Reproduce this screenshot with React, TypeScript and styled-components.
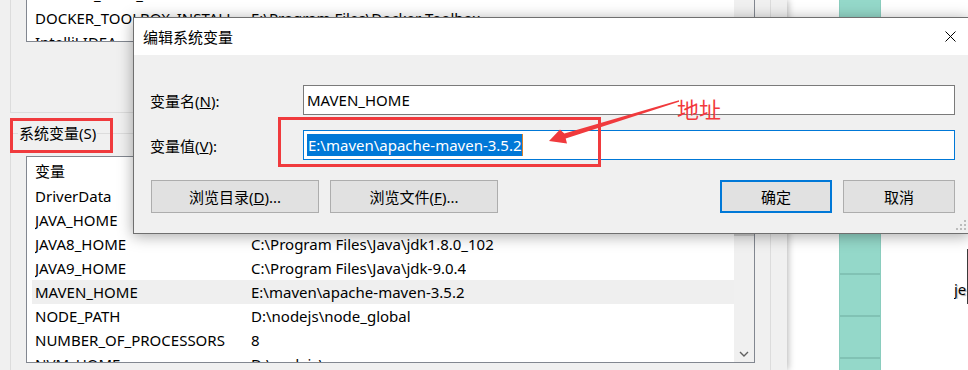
import React from "react";
import styled, { createGlobalStyle } from "styled-components";

type VarRow = {
  name: string;
  value: string;
  selected?: boolean;
};

const userRows: VarRow[] = [
  { name: "DOCKER_CERT_PATH", value: "C:\\Users\\Administrator\\.docker\\machine\\machines\\default" },
  { name: "DOCKER_TOOLBOX_INSTALL_PATH", value: "E:\\Program Files\\Docker Toolbox" },
  { name: "IntelliJ IDEA", value: "D:\\IntelliJ IDEA\\bin;" },
];

const systemRows: VarRow[] = [
  { name: "DriverData", value: "C:\\Windows\\System32\\Drivers\\DriverData" },
  { name: "JAVA_HOME", value: "%JAVA8_HOME%" },
  { name: "JAVA8_HOME", value: "C:\\Program Files\\Java\\jdk1.8.0_102" },
  { name: "JAVA9_HOME", value: "C:\\Program Files\\Java\\jdk-9.0.4" },
  { name: "MAVEN_HOME", value: "E:\\maven\\apache-maven-3.5.2", selected: true },
  { name: "NODE_PATH", value: "D:\\nodejs\\node_global" },
  { name: "NUMBER_OF_PROCESSORS", value: "8" },
  { name: "NVM_HOME", value: "D:\\nodejs\\nvm" },
];

const GlobalStyle = createGlobalStyle`
  html, body {
    margin: 0;
    padding: 0;
  }
  body {
    width: 968px;
    height: 370px;
    overflow: hidden;
    background: #fff;
    color: #000;
    font-family: "Noto Sans", "Noto Sans CJK SC", sans-serif;
    font-size: 15px;
  }
`;

const Desktop = styled.div`
  position: relative;
  display: flex;
  width: 968px;
  height: 370px;
  overflow: hidden;
`;

/* background window: environment variables */
const EnvWindow = styled.div`
  position: relative;
  z-index: 1;
  width: 787px;
  flex-shrink: 0;
  box-sizing: border-box;
  padding-left: 10px;
  display: flex;
  flex-direction: column;
  background: #f0f0f0;
  box-shadow: 1px 0 7px rgba(0, 0, 0, 0.3);
`;

const UserGroup = styled.div`
  width: 761px;
  height: 113px;
  box-sizing: border-box;
  padding-left: 15px;
  border: 1px solid #dcdcdc;
  border-top: none;
`;

const SystemGroup = styled.div`
  flex: 1;
  width: 761px;
  margin-top: 20px;
  box-sizing: border-box;
  padding-left: 15px;
  border: 1px solid #dcdcdc;
  border-bottom: none;
`;

const GroupLabel = styled.div`
  width: fit-content;
  margin: -12px 0 0 -8px;
  padding: 0 1px;
  line-height: 22px;
  background: #f0f0f0;
`;

const ListBox = styled.div<{ $height: number; $open?: boolean }>`
  display: flex;
  width: 729px;
  height: ${(p) => p.$height}px;
  margin-top: ${(p) => (p.$open ? 0 : 12)}px;
  box-sizing: border-box;
  overflow: hidden;
  background: #fff;
  border: 1px solid #828790;
  border-top: ${(p) => (p.$open ? "none" : "1px solid #828790")};
`;

const Rows = styled.div<{ $shift: number }>`
  flex: 1;
  min-width: 0;
  padding-left: 5px;
  margin-top: ${(p) => p.$shift}px;
`;

const Row = styled.div<{ $selected?: boolean; $header?: boolean }>`
  display: flex;
  align-items: center;
  height: ${(p) => (p.$header ? 27 : 24)}px;
  padding-left: 3px;
  white-space: nowrap;
  background: ${(p) => (p.$selected ? "#efefef" : "transparent")};
`;

const NameCell = styled.span`
  width: 216px;
  flex-shrink: 0;
  overflow: hidden;
  text-overflow: ellipsis;
`;

const ValueCell = styled.span`
  overflow: hidden;
`;

const ScrollBar = styled.div`
  width: 20px;
  flex-shrink: 0;
  display: flex;
  flex-direction: column;
  background: #f0f0f0;
`;

const ScrollArrow = styled.div`
  height: 17px;
  display: flex;
  align-items: center;
  justify-content: center;
  color: #606060;
`;

const ScrollThumb = styled.div`
  height: 62px;
  background: #cdcdcd;
`;

const ScrollTrack = styled.div`
  flex: 1;
`;

/* desktop to the right of the window */
const RightPane = styled.div`
  flex: 1;
  display: flex;
  padding-left: 52px;
  background: #fff;
`;

const TealColumn = styled.div`
  width: 42px;
  height: 100%;
  box-sizing: border-box;
  border-left: 1px solid #8acdbe;
  border-right: 1px solid #8acdbe;
  background: repeating-linear-gradient(
    to bottom,
    #94d8c9 0,
    #94d8c9 21px,
    #81c2b4 21px,
    #81c2b4 23px,
    #94d8c9 23px,
    #94d8c9 42px
  );
`;

const DesktopIcon = styled.div`
  margin-left: auto;
  margin-top: 249px;
  display: flex;
  flex-direction: column;
  align-items: flex-end;
`;

const IconEdge = styled.div`
  width: 1px;
  height: 55px;
  background: #3a3a3a;
`;

const IconLabel = styled.div`
  width: 14px;
  margin-top: -25px;
  overflow: hidden;
  font-size: 15px;
  line-height: 20px;
  text-shadow: 0 0 2px #fff, 1px 1px 1px #999;
`;

/* edit dialog */
const Dialog = styled.div`
  position: absolute;
  z-index: 5;
  left: 133px;
  top: 17px;
  width: 837px;
  height: 217px;
  box-sizing: border-box;
  background: #f0f0f0;
  border: 1px solid #6f6f6f;
  box-shadow: 0 2px 14px rgba(0, 0, 0, 0.35);
`;

const TitleBar = styled.div`
  height: 37px;
  display: flex;
  align-items: center;
  justify-content: space-between;
  padding-left: 9px;
  background: #fff;
`;

const CloseButton = styled.div`
  width: 38px;
  height: 37px;
  display: flex;
  align-items: center;
  justify-content: center;
`;

const DialogBody = styled.div`
  padding: 30px 14px 0 16px;
`;

const FieldRow = styled.div<{ $gap: number }>`
  display: flex;
  align-items: center;
  height: 30px;
  margin-top: ${(p) => p.$gap}px;
`;

const FieldLabel = styled.label`
  width: 153px;
  flex-shrink: 0;
`;

const TextInput = styled.div<{ $focused?: boolean }>`
  flex: 1;
  height: 30px;
  box-sizing: border-box;
  display: flex;
  align-items: center;
  padding-left: 3px;
  background: #fff;
  border: 1px solid ${(p) => (p.$focused ? "#0078d7" : "#7a7a7a")};
  white-space: nowrap;
`;

const Selection = styled.span`
  line-height: 22px;
  padding-left: 1px;
  background: #0078d7;
  color: #fff;
  border-right: 1px solid #d9822b;
`;

const ButtonRow = styled.div`
  display: flex;
  gap: 11px;
  margin-top: 20px;
  padding-left: 1px;
`;

const Button = styled.div<{ $wide?: boolean; $primary?: boolean }>`
  width: ${(p) => (p.$wide ? 168 : 112)}px;
  height: 33px;
  box-sizing: border-box;
  display: flex;
  align-items: center;
  justify-content: center;
  background: #e1e1e1;
  border: ${(p) => (p.$primary ? "2px solid #0078d7" : "1px solid #adadad")};
`;

const Spacer = styled.div`
  flex: 1;
`;

const Grip = styled.svg`
  position: absolute;
  right: 2px;
  bottom: 2px;
`;

/* red annotations drawn over the screenshot */
const RedBox = styled.div<{ $x: number; $y: number; $w: number; $h: number }>`
  position: absolute;
  z-index: 10;
  left: ${(p) => p.$x}px;
  top: ${(p) => p.$y}px;
  width: ${(p) => p.$w}px;
  height: ${(p) => p.$h}px;
  box-sizing: border-box;
  border: 3px solid #f03a3d;
`;

const Arrow = styled.svg`
  position: absolute;
  z-index: 10;
  left: 540px;
  top: 95px;
`;

const Note = styled.div`
  position: absolute;
  z-index: 10;
  left: 677px;
  top: 93px;
  color: #f2393c;
  font-family: "Noto Sans CJK SC", sans-serif;
  font-size: 22px;
  line-height: 30px;
`;

const VarList = ({ rows, height, shift, header, open }: {
  rows: VarRow[];
  height: number;
  shift: number;
  header?: boolean;
  open?: boolean;
}) => (
  <ListBox $height={height} $open={open}>
    <Rows $shift={shift}>
      {header && (
        <Row $header>
          <NameCell>变量</NameCell>
          <ValueCell>值</ValueCell>
        </Row>
      )}
      {rows.map((r) => (
        <Row key={r.name} $selected={r.selected}>
          <NameCell>{r.name}</NameCell>
          <ValueCell>{r.value}</ValueCell>
        </Row>
      ))}
    </Rows>
    <ScrollBar>
      {header && (
        <>
          <ScrollArrow />
          <ScrollThumb />
          <ScrollTrack />
          <ScrollArrow>
            <svg width="10" height="6" viewBox="0 0 10 6">
              <path d="M1 1 L5 5 L9 1" fill="none" stroke="#606060" strokeWidth="1.4" />
            </svg>
          </ScrollArrow>
        </>
      )}
    </ScrollBar>
  </ListBox>
);

export default function App() {
  return (
    <Desktop>
      <GlobalStyle />
      <EnvWindow>
        <UserGroup>
          <VarList rows={userRows} height={42} shift={-18} open />
        </UserGroup>
        <SystemGroup>
          <GroupLabel>系统变量(S)</GroupLabel>
          <VarList rows={systemRows} height={207} shift={0} header />
        </SystemGroup>
      </EnvWindow>
      <RightPane>
        <TealColumn />
        <DesktopIcon>
          <IconEdge />
          <IconLabel>je</IconLabel>
        </DesktopIcon>
      </RightPane>

      <Dialog>
        <TitleBar>
          <span>编辑系统变量</span>
          <CloseButton>
            <svg width="11" height="11" viewBox="0 0 11 11">
              <path d="M0.5 0.5 L10.5 10.5 M10.5 0.5 L0.5 10.5" stroke="#000" strokeWidth="1" />
            </svg>
          </CloseButton>
        </TitleBar>
        <DialogBody>
          <FieldRow $gap={0}>
            <FieldLabel>变量名(<u>N</u>):</FieldLabel>
            <TextInput>MAVEN_HOME</TextInput>
          </FieldRow>
          <FieldRow $gap={15}>
            <FieldLabel>变量值(<u>V</u>):</FieldLabel>
            <TextInput $focused>
              <Selection>E:\maven\apache-maven-3.5.2</Selection>
            </TextInput>
          </FieldRow>
          <ButtonRow>
            <Button $wide>浏览目录(<u>D</u>)...</Button>
            <Button $wide>浏览文件(<u>F</u>)...</Button>
            <Spacer />
            <Button $primary>确定</Button>
            <Button>取消</Button>
          </ButtonRow>
        </DialogBody>
        <Grip width="12" height="12" viewBox="0 0 12 12">
          {[
            [9, 1], [9, 5], [5, 5], [9, 9], [5, 9], [1, 9],
          ].map(([x, y]) => (
            <rect key={`${x}-${y}`} x={x} y={y} width="2" height="2" fill="#bcbcbc" />
          ))}
        </Grip>
      </Dialog>

      <RedBox $x={10} $y={118} $w={103} $h={35} />
      <RedBox $x={278} $y={117} $w={323} $h={50} />
      <Arrow width="145" height="55" viewBox="0 0 145 55">
        <polygon
          points="139,5.3 24.3,38.6 20,34.5 9,46 27,48.5 25.7,43.4 139,6.7"
          fill="#f03a3d"
        />
      </Arrow>
      <Note>地址</Note>
    </Desktop>
  );
}
